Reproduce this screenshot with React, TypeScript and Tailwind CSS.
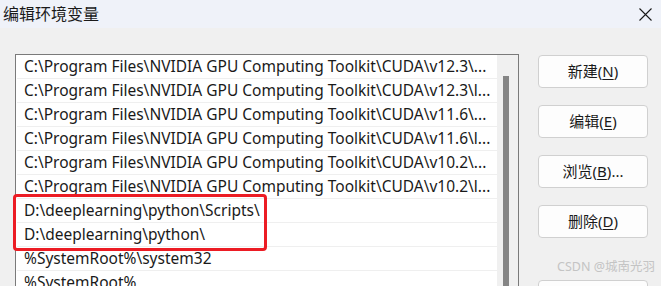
import type { ReactNode } from "react";

const rows: string[] = [
	"C:\\Program Files\\NVIDIA GPU Computing Toolkit\\CUDA\\v12.3\\...",
	"C:\\Program Files\\NVIDIA GPU Computing Toolkit\\CUDA\\v12.3\\l...",
	"C:\\Program Files\\NVIDIA GPU Computing Toolkit\\CUDA\\v11.6\\...",
	"C:\\Program Files\\NVIDIA GPU Computing Toolkit\\CUDA\\v11.6\\l...",
	"C:\\Program Files\\NVIDIA GPU Computing Toolkit\\CUDA\\v10.2\\...",
	"C:\\Program Files\\NVIDIA GPU Computing Toolkit\\CUDA\\v10.2\\l...",
	"D:\\deeplearning\\python\\Scripts\\",
	"D:\\deeplearning\\python\\",
	"%SystemRoot%\\system32",
	"%SystemRoot%",
];

const buttons: { label: string; key: string; tail?: string }[] = [
	{ label: "新建", key: "N" },
	{ label: "编辑", key: "E" },
	{ label: "浏览", key: "B", tail: "..." },
	{ label: "删除", key: "D" },
];

function DialogButton(props: Readonly<{ label?: string; hotkey?: string; tail?: string }>): ReactNode {
	const { label, hotkey, tail } = props;
	return (
		<button
			className="flex h-[33px] w-[110px] shrink-0 items-center justify-center rounded-[4px] border border-[#d0d0d0] bg-[#fdfdfd] text-[15px] text-[#1a1a1a]"
			type="button"
		>
			{label && (
				<span>
					{label}(<span className="underline underline-offset-2">{hotkey}</span>){tail}
				</span>
			)}
		</button>
	);
}

export default function App(): ReactNode {
	return (
		<div
			className="relative h-[286px] w-[661px] overflow-hidden bg-[#f0f0f0]"
			style={{ fontFamily: '"Noto Sans", "Noto Sans CJK SC", sans-serif' }}
		>
			{/* title bar */}
			<div className="flex h-[28px] items-center justify-between bg-[#eff2f9] pl-[3px] pr-[9px]">
				<span className="text-[16px] leading-none text-[#1a1a1a]">编辑环境变量</span>
				<svg className="h-[13px] w-[13px]" viewBox="0 0 13 13">
					<path d="M0.5 0.5 L12.5 12.5 M12.5 0.5 L0.5 12.5" stroke="#1a1a1a" strokeWidth="1.1" />
				</svg>
			</div>

			<div className="flex pl-[15px] pt-[26px]">
				{/* variable list */}
				<div className="relative flex h-[260px] w-[504px] shrink-0 border border-[#7a7a7a] bg-white">
					<ul className="flex-1 pl-[1px]">
						{rows.map((row) => (
							<li
								key={row}
								className="flex h-[24px] items-center whitespace-nowrap border-b border-[#efefef] pl-[7px] text-[15.5px] leading-none text-[#1a1a1a]"
							>
								{row}
							</li>
						))}
					</ul>
					<div className="w-[21px] shrink-0 bg-[#f0f0f0] pl-[6px] pt-[21px]">
						<div className="h-full w-[6px] bg-[#858585]" />
					</div>
				</div>

				{/* action buttons */}
				<div className="ml-[19px] flex flex-col gap-[17px] pt-[1px]">
					{buttons.map((b) => (
						<DialogButton key={b.key} hotkey={b.key} label={b.label} tail={b.tail} />
					))}
					<div className="mt-[25px]">
						<DialogButton />
					</div>
				</div>
			</div>

			{/* annotation highlight */}
			<div className="absolute left-[13px] top-[194px] h-[57px] w-[254px] rounded-[4px] border-[3px] border-[#ec1c24]" />

			{/* watermark */}
			<span className="absolute left-[557px] top-[258px] whitespace-nowrap text-[12.5px] leading-[18px] text-[#c4c4c4]">
				CSDN @城南光羽
			</span>
		</div>
	);
}
